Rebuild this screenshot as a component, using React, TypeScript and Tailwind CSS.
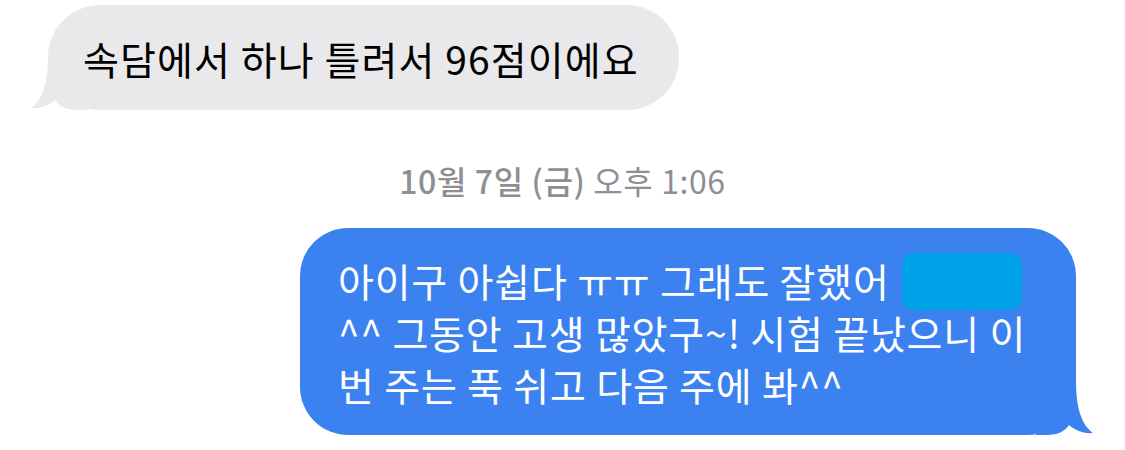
import { memo } from 'react'

const font = { fontFamily: '"Noto Sans CJK KR", "Noto Sans", sans-serif' }

function Tail({ color, flip }: { color: string; flip?: boolean }) {
  return (
    <svg
      viewBox="0 0 60 60"
      className={
        flip
          ? 'absolute right-[-20px] bottom-0 w-[60px] h-[60px] -scale-x-100'
          : 'absolute left-[-20px] bottom-0 w-[60px] h-[60px]'
      }
    >
      <path
        d="M20 6 C20 34 14 50 3 58 C13 59 21 55 27 50 C31 56 37 60 50 60 L60 60 L60 6 Z"
        fill={color}
      />
    </svg>
  )
}

function Chat() {
  return (
    <div className="w-[1125px] h-[450px] bg-white overflow-hidden" style={font}>
      {/* incoming */}
      <div className="pl-[48px] pt-[5px]">
        <div className="relative inline-flex items-center w-[631px] h-[105px] px-[35px] rounded-[52px] bg-[#e9e9eb] text-black text-[39px] leading-[52px] tracking-[1.1px]">
          <Tail color="#e9e9eb" />
          <span className="relative">속담에서 하나 틀려서 96점이에요</span>
        </div>
      </div>

      {/* timestamp */}
      <div className="mt-[51px] text-center text-[32px] leading-[38px] tracking-[0.6px] text-[#8e8e93]">
        <span className="font-medium">10월 7일 (금)</span> 오후 1:06
      </div>

      {/* outgoing */}
      <div className="flex justify-end pr-[49px] mt-[29px]">
        <div className="relative w-[776px] h-[207px] rounded-[48px] bg-[#3b82f0] pl-[38px] pt-[26px] text-white text-[39px] leading-[52px] tracking-[0.8px]">
          <Tail color="#3b82f0" flip />
          <div className="relative flex items-center h-[52px]">
            아이구 아쉽다 ㅠㅠ 그래도 잘했어
            <span className="ml-[12px] mt-[2px] inline-block w-[120px] h-[57px] rounded-[12px] bg-[#00a2e8]" />
          </div>
          <div className="relative">^^ 그동안 고생 많았구~! 시험 끝났으니 이</div>
          <div className="relative">번 주는 푹 쉬고 다음 주에 봐^^</div>
        </div>
      </div>
    </div>
  )
}

export default memo(Chat)
